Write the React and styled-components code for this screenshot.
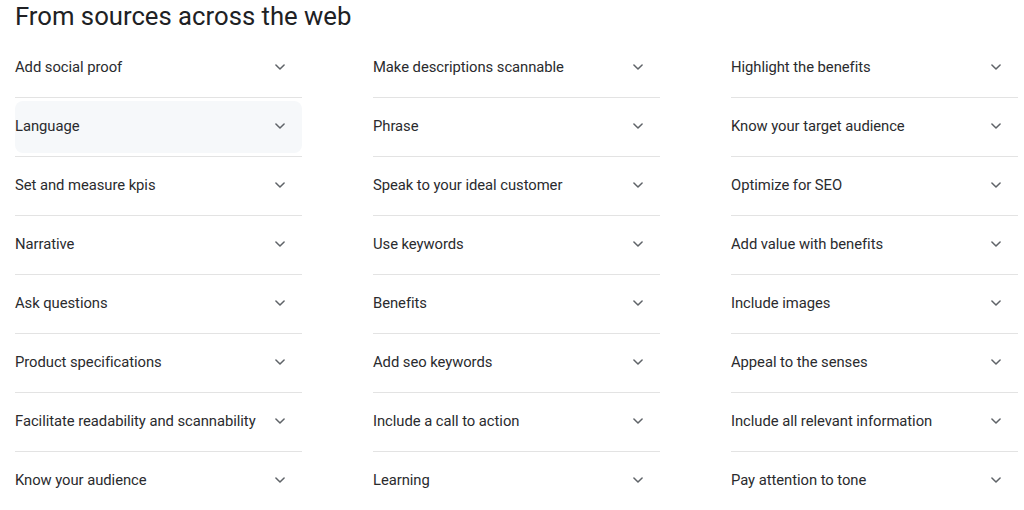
import React from "react";
import styled, { createGlobalStyle } from "styled-components";

const Global = createGlobalStyle`
  html, body { margin: 0; padding: 0; background: #fff; }
  body { font-family: Roboto, "Noto Sans", Arial, sans-serif; }
`;

const Page = styled.div`
  padding: 0 6px 0 15px;
  width: 1024px;
  box-sizing: border-box;
`;

const Heading = styled.h2`
  margin: 0;
  height: 39px;
  font-family: Roboto, Arial, sans-serif;
  font-weight: 400;
  font-size: 25.7px;
  line-height: 32px;
  color: #202124;
`;

const Grid = styled.div`
  display: grid;
  grid-template-columns: repeat(3, 287px);
  column-gap: 71px;
`;

const Column = styled.div`
  display: flex;
  flex-direction: column;
`;

const Row = styled.div`
  height: ${(p) => (p.$last ? "58px" : "59px")};
  box-sizing: border-box;
  display: flex;
  align-items: center;
  justify-content: space-between;
  border-bottom: ${(p) => (p.$last ? "none" : "1px solid #e3e3e3")};
  padding: 0 15px 2px 0;
  position: relative;
`;

const Hover = styled.div`
  position: absolute;
  left: 0;
  right: 0;
  top: 3px;
  bottom: 3px;
  background: #f6f8fa;
  border-radius: 8px;
  z-index: 0;
`;

const Label = styled.span`
  position: relative;
  z-index: 1;
  font-size: 14.8px;
  color: #2a2b2e;
  letter-spacing: -0.05px;
`;

const Chevron = styled.svg`
  position: relative;
  z-index: 1;
  width: 14px;
  height: 14px;
  color: #5f6368;
`;

const columns = [
  [
    "Add social proof",
    "Language",
    "Set and measure kpis",
    "Narrative",
    "Ask questions",
    "Product specifications",
    "Facilitate readability and scannability",
    "Know your audience",
  ],
  [
    "Make descriptions scannable",
    "Phrase",
    "Speak to your ideal customer",
    "Use keywords",
    "Benefits",
    "Add seo keywords",
    "Include a call to action",
    "Learning",
  ],
  [
    "Highlight the benefits",
    "Know your target audience",
    "Optimize for SEO",
    "Add value with benefits",
    "Include images",
    "Appeal to the senses",
    "Include all relevant information",
    "Pay attention to tone",
  ],
];

function ChevronIcon() {
  return (
    <Chevron viewBox="0 0 24 24" fill="none">
      <path d="M5 8.5l7 7 7-7" stroke="currentColor" strokeWidth="2.6" strokeLinecap="round" strokeLinejoin="round" />
    </Chevron>
  );
}

export default function App() {
  return (
    <>
      <Global />
      <Page>
        <Heading>From sources across the web</Heading>
        <Grid>
          {columns.map((col, ci) => (
            <Column key={ci}>
              {col.map((item, i) => (
                <Row key={item} $last={i === col.length - 1}>
                  {ci === 0 && i === 1 && <Hover />}
                  <Label>{item}</Label>
                  <ChevronIcon />
                </Row>
              ))}
            </Column>
          ))}
        </Grid>
      </Page>
    </>
  );
}
